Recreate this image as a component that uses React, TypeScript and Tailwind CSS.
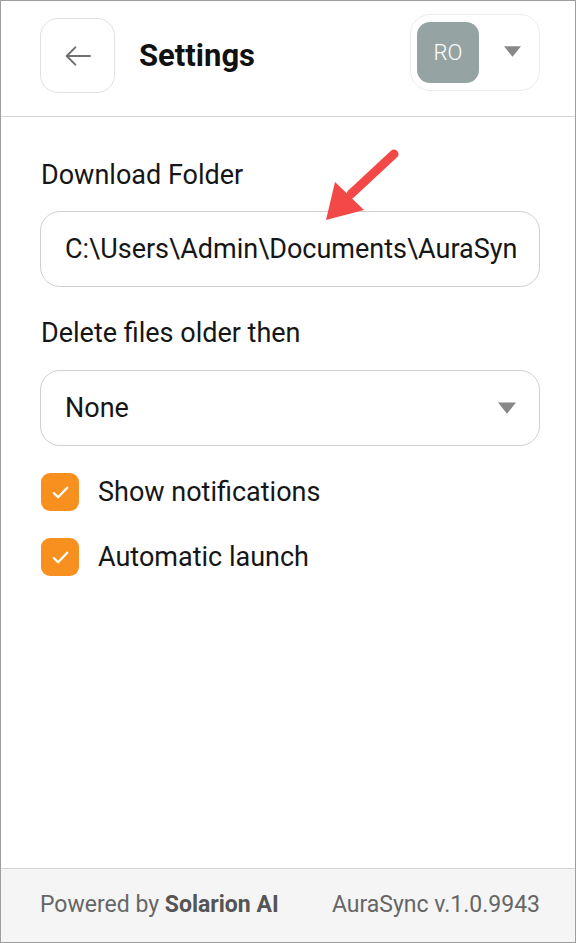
import { useState } from "react";

function Check() {
  return (
    <svg viewBox="0 0 24 24" className="w-[23px] h-[23px]" fill="none" stroke="white" strokeWidth={2.4} strokeLinecap="round" strokeLinejoin="round">
      <path d="M5 12.5l4.5 4.5L19 7" />
    </svg>
  );
}

function CheckRow({ label, checked, onToggle }: { label: string; checked: boolean; onToggle: () => void }) {
  return (
    <button type="button" onClick={onToggle} className="flex items-center gap-[19px] text-left">
      <span
        className={[
          "w-[38px] h-[38px] rounded-[9px] flex items-center justify-center shrink-0",
          checked ? "bg-[#f7901e]" : "bg-white border border-[#ccc]",
        ].join(" ")}
      >
        {checked ? <Check /> : null}
      </span>
      <span className="text-[27px] text-[#161616] leading-[30px]">{label}</span>
    </button>
  );
}

export default function App() {
  const [notify, setNotify] = useState(true);
  const [launch, setLaunch] = useState(true);

  return (
    <div
      className="w-[576px] h-[943px] border border-[#9e9e9e] bg-white flex flex-col relative overflow-hidden"
      style={{ fontFamily: "Roboto, 'Noto Sans', sans-serif" }}
    >
      {/* header */}
      <div className="h-[116px] shrink-0 border-b border-[#d4d4d4] flex items-start pl-[39px] pr-[35px]">
        <button
          type="button"
          className="mt-[17px] w-[75px] h-[75px] rounded-[18px] border border-[#e0e0e0] flex items-center justify-center text-[#707070]"
        >
          <svg viewBox="0 0 24 24" className="w-[32px] h-[32px]" fill="none" stroke="currentColor" strokeWidth={1.5} strokeLinecap="round" strokeLinejoin="round">
            <path d="M21 12H4M10 5.5L3.5 12l6.5 6.5" />
          </svg>
        </button>
        <h1 className="ml-[24px] mt-[37px] text-[31px] font-bold text-[#111] leading-[36px]">Settings</h1>
        <div className="ml-auto mt-[13px] w-[130px] h-[77px] rounded-[20px] border border-[#ececec] flex items-center pl-[6px] pr-[18px]">
          <div className="w-[62px] h-[61px] rounded-[13px] bg-[#95a3a3] flex items-center justify-center text-white text-[22px] font-light">
            RO
          </div>
          <svg viewBox="0 0 16 10" className="ml-auto w-[17px] h-[11px] mb-[2px]" fill="#888">
            <path d="M0 0h16L8 10z" />
          </svg>
        </div>
      </div>

      {/* content */}
      <div className="flex-1 pl-[39px] pr-[35px] flex flex-col">
        <label className="mt-[43px] pl-[1px] text-[27px] text-[#161616] leading-[30px]">Download Folder</label>
        <div className="mt-[21px] h-[76px] rounded-[20px] border border-[#d0d0d0] flex items-center pl-[24px] pr-[22px] overflow-hidden">
          <span className="text-[27px] text-[#161616] whitespace-nowrap overflow-hidden">
            C:\Users\Admin\Documents\AuraSync
          </span>
        </div>

        <label className="mt-[31px] pl-[1px] text-[27px] text-[#161616] leading-[30px]">Delete files older then</label>
        <div className="mt-[22px] h-[76px] rounded-[20px] border border-[#d0d0d0] flex items-center pl-[24px] pr-[23px]">
          <span className="text-[27px] text-[#161616]">None</span>
          <svg viewBox="0 0 16 10" className="ml-auto w-[18px] h-[12px]" fill="#888">
            <path d="M0 0h16L8 10z" />
          </svg>
        </div>

        <div className="mt-[27px] flex flex-col gap-[27px] pl-[1px]">
          <CheckRow label="Show notifications" checked={notify} onToggle={() => setNotify(!notify)} />
          <CheckRow label="Automatic launch" checked={launch} onToggle={() => setLaunch(!launch)} />
        </div>
      </div>

      {/* footer */}
      <div className="h-[74px] shrink-0 border-t border-[#d4d4d4] bg-[#f5f5f5] flex items-center justify-between pr-[35px] pl-[39px] text-[23px] text-[#666]">
        <span>
          Powered by <span className="font-bold text-[#555]">Solarion AI</span>
        </span>
        <span>AuraSync v.1.0.9943</span>
      </div>

      {/* annotation arrow */}
      <svg className="absolute left-[318px] top-[144px] w-[90px] h-[80px] pointer-events-none" viewBox="0 0 90 80">
        <path d="M75 9L32 49" stroke="#f24848" strokeWidth={9} strokeLinecap="round" />
        <path d="M7 75L16 37L45 65Z" fill="#f24848" />
      </svg>
    </div>
  );
}
